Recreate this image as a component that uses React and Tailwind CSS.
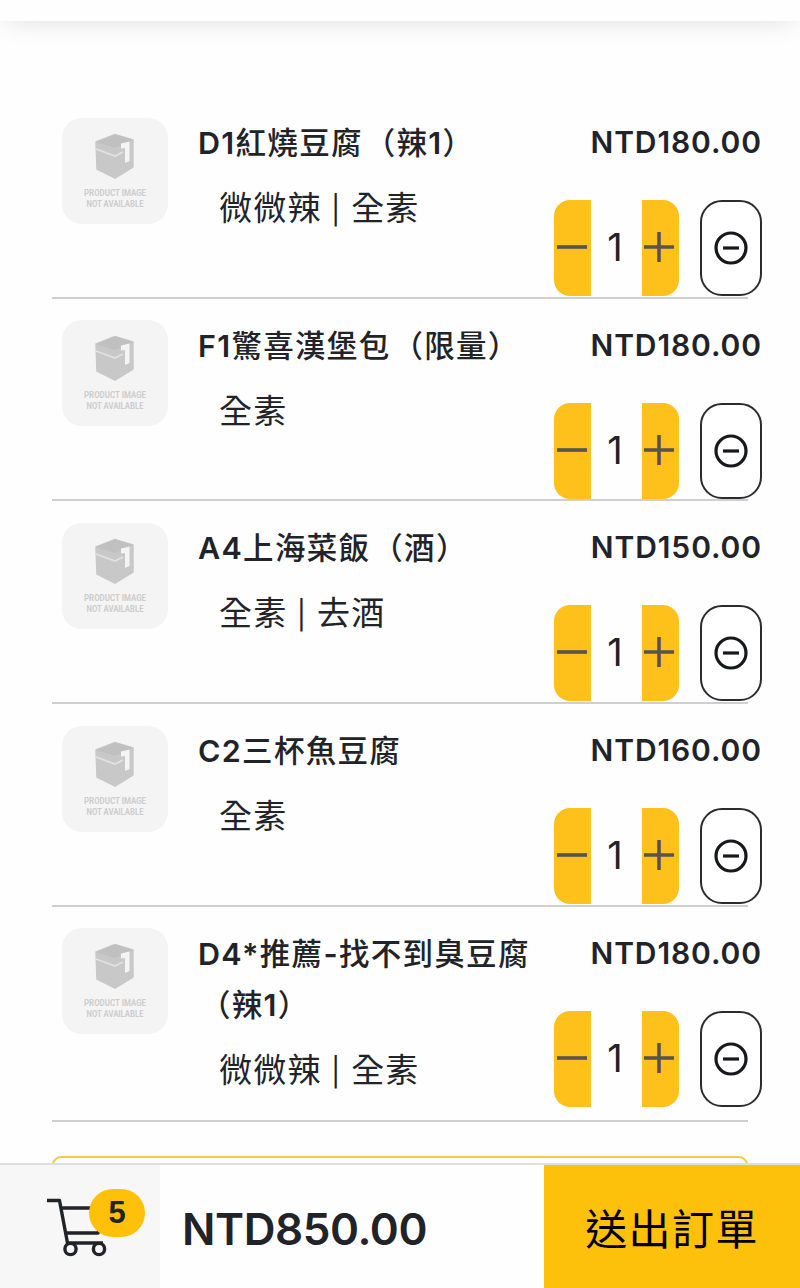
import React from 'react';

const items = [
  { name: 'D1紅燒豆腐（辣1）', options: ['微微辣', '全素'], price: 'NTD180.00', qty: 1 },
  { name: 'F1驚喜漢堡包（限量）', options: ['全素'], price: 'NTD180.00', qty: 1 },
  { name: 'A4上海菜飯（酒）', options: ['全素', '去酒'], price: 'NTD150.00', qty: 1 },
  { name: 'C2三杯魚豆腐', options: ['全素'], price: 'NTD160.00', qty: 1 },
  { name: 'D4*推薦-找不到臭豆腐（辣1）', options: ['微微辣', '全素'], price: 'NTD180.00', qty: 1 },
];

function ProductPlaceholder() {
  return (
    <svg viewBox="0 0 106 106" className="-mt-[0.5px] h-[106px] w-[106px] shrink-0 rounded-[20px] bg-[#f4f4f4]">
      <path d="M34 24 L53 16.5 L71 22 V49 L53 60 L35 51 Z" fill="#c8c8c8" stroke="#c8c8c8" strokeWidth="1.5" strokeLinejoin="round" />
      <path d="M34 24 L53 16.5 L71 22 L53 30 Z" fill="#c0c0c0" />
      <path d="M34 31 L53 38 L61 34" fill="none" stroke="#e2e2e2" strokeWidth="1.8" />
      <path d="M59 25.5 L67.5 23.5 V43 L63 45 V30 L59 30.5 Z" fill="#f4f4f4" />
      <g fill="#cdcdcd" fontFamily="Roboto, sans-serif" fontSize="9" fontWeight="700" textAnchor="middle">
        <text x="53" y="78" textLength="62" lengthAdjust="spacingAndGlyphs">PRODUCT IMAGE</text>
        <text x="53" y="89" textLength="57" lengthAdjust="spacingAndGlyphs">NOT AVAILABLE</text>
      </g>
    </svg>
  );
}

function Stepper({ qty }) {
  return (
    <div className="flex h-24 w-[125px]">
      <button className="grid w-[37px] place-items-center rounded-l-[16px] bg-[#fec11c]" aria-label="minus">
        <svg viewBox="0 0 32 32" className="mr-[2px] h-8 w-8" stroke="#575350" strokeWidth="3.6">
          <path d="M1 15H31" />
        </svg>
      </button>
      <span className="flex-1 pr-[3px] text-center text-[38px] leading-[95px]">{qty}</span>
      <button className="grid w-[37px] place-items-center rounded-r-[16px] bg-[#fec11c]" aria-label="plus">
        <svg viewBox="0 0 32 32" className="mr-[3px] h-8 w-8" stroke="#575350" strokeWidth="3.6">
          <path d="M1 15H31M16 0V30" />
        </svg>
      </button>
    </div>
  );
}

function partClass(part) {
  if (part.startsWith('（')) return 'ml-[2px]';
  // latin parts of a name are set a little heavier than the chinese ones
  return /^[A-Z0-9*-]/.test(part) ? 'font-semibold' : undefined;
}

function ItemName({ name }) {
  const parts = name.match(/[A-Z0-9*-]+|（?[^A-Z0-9*（-]+/g);
  return (
    <h2 className="text-[30.5px] leading-[51px] font-medium tracking-[1.3px]">
      {parts.map((part, i) => (
        <span key={i} className={partClass(part)}>{part}</span>
      ))}
    </h2>
  );
}

function CartRow({ item }) {
  return (
    <li className="flex min-h-[202.7px] border-b-2 border-[#cfcfd1] pt-[22px] pl-[10px] last:min-h-[215.6px]">
      <ProductPlaceholder />
      <div className="ml-[30px] w-[350px] shrink-0 -mt-px">
        <ItemName name={item.name} />
        <p className="mt-[14px] pl-[21px] text-[33px] leading-[52px] tracking-[1.2px]">
          {item.options.map((option, i) => (
            <React.Fragment key={option}>
              {i > 0 && <span className="text-[28px] leading-none tracking-[1.5px]"> | </span>}
              {option}
            </React.Fragment>
          ))}
        </p>
      </div>
      <div className="-mr-[14px] flex flex-1 flex-col items-end">
        <div className="-mt-px text-[30px] leading-[50px] font-semibold tracking-[0.9px] whitespace-nowrap">{item.price}</div>
        <div className="mt-[33px] flex w-[208px] justify-between">
          <Stepper qty={item.qty} />
          <button className="grid h-24 w-[62px] place-items-center rounded-[22px] border-2 border-[#2b2c30] bg-white" aria-label="remove">
            <svg viewBox="0 0 34 34" className="h-[34px] w-[34px]" fill="none" stroke="#17181b" strokeWidth="3.2">
              <circle cx="17" cy="17" r="15" />
              <path d="M9 17H25" />
            </svg>
          </button>
        </div>
      </div>
    </li>
  );
}

export default function App() {
  return (
    <div className="flex h-[1288px] w-[800px] flex-col overflow-hidden bg-[#fefefe] font-['Inter','Noto_Sans_CJK_TC',sans-serif] text-[#212329]">
      <header className="-mt-[60px] mb-[75px] h-[81px] shrink-0 bg-[#fefefe] shadow-[0_6px_26px_-6px_rgba(0,0,0,0.13)]" />
      <main className="min-h-0 flex-1 overflow-hidden px-[52px]">
        <ul>
          {items.map((item, i) => (
            <CartRow key={i} item={item} />
          ))}
        </ul>
        <div className="mt-[34px] h-20 rounded-[9px] border-2 border-[#f3c947]" />
      </main>
      <footer className="flex h-[125px] shrink-0 border-t-2 border-[#dfdfe1] bg-[#fefefe]">
        <div className="relative w-40 bg-[#f7f7f7]">
          <svg viewBox="0 0 64 64" className="mt-[32px] ml-[46px] h-16 w-16" fill="none" stroke="#212329" strokeWidth="3.4">
            <path d="M1 3.5H13.5L21.5 46H57M15 11H60M20 36H52L60 20" strokeLinejoin="round" />
            <circle cx="24.5" cy="52" r="5.6" fill="#f7f7f7" />
            <circle cx="53" cy="52" r="5.6" fill="#f7f7f7" />
          </svg>
          <span className="absolute top-[24px] left-[89px] h-12 w-[56px] rounded-full bg-[#fec008] text-center font-['Liberation_Sans',sans-serif] text-[31px] leading-[47px] font-bold">
            5
          </span>
        </div>
        <div className="flex-1 pl-[22px] text-[44px] leading-[128px] font-semibold tracking-[-0.4px]">NTD850.00</div>
        <button className="w-64 bg-[#fec10b] pt-[7px] text-[42px] leading-[116px] tracking-[1.4px] text-black">送出訂單</button>
      </footer>
    </div>
  );
}
